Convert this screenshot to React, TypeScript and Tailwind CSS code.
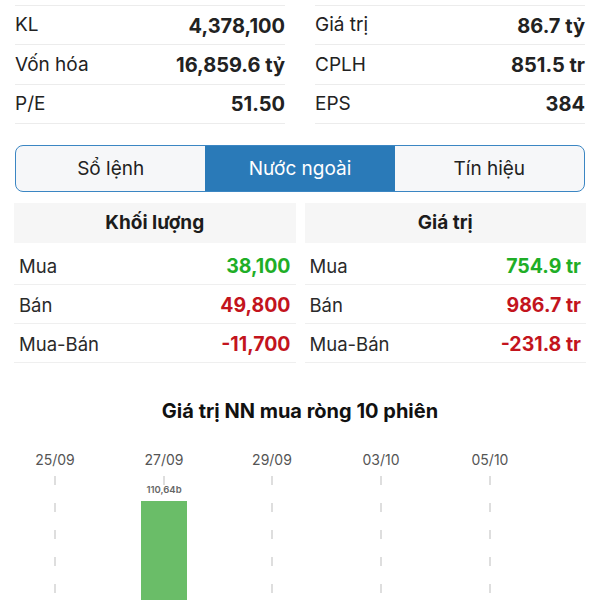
import { useState } from "react";

type Stat = { label: string; value: string };

const leftStats: Stat[] = [
  { label: "KL", value: "4,378,100" },
  { label: "Vốn hóa", value: "16,859.6 tỷ" },
  { label: "P/E", value: "51.50" },
];

const rightStats: Stat[] = [
  { label: "Giá trị", value: "86.7 tỷ" },
  { label: "CPLH", value: "851.5 tr" },
  { label: "EPS", value: "384" },
];

type FlowRow = { label: string; value: string; up: boolean };

const volumeRows: FlowRow[] = [
  { label: "Mua", value: "38,100", up: true },
  { label: "Bán", value: "49,800", up: false },
  { label: "Mua-Bán", value: "-11,700", up: false },
];

const valueRows: FlowRow[] = [
  { label: "Mua", value: "754.9 tr", up: true },
  { label: "Bán", value: "986.7 tr", up: false },
  { label: "Mua-Bán", value: "-231.8 tr", up: false },
];

const tabs = ["Sổ lệnh", "Nước ngoài", "Tín hiệu"];

const dates = [
  { x: 55, label: "25/09" },
  { x: 164, label: "27/09" },
  { x: 272, label: "29/09" },
  { x: 381, label: "03/10" },
  { x: 490, label: "05/10" },
];

function StatColumn({ items }: { items: Stat[] }) {
  return (
    <div className="flex flex-col border-t border-[#ececec]">
      {items.map((s) => (
        <div key={s.label} className="flex h-[39.3px] items-center justify-between border-b border-[#ececec] pt-[1px]">
          <span className="text-[19px] text-[#222]">{s.label}</span>
          <span className="text-[20px] font-bold text-[#222]">{s.value}</span>
        </div>
      ))}
    </div>
  );
}

function FlowTable({ title, rows }: { title: string; rows: FlowRow[] }) {
  return (
    <div className="flex flex-col">
      <div className="flex h-[40px] items-center justify-center bg-[#f6f6f6] text-[19px] font-bold text-[#1c1c1c]">
        {title}
      </div>
      <div className="mt-[3px] flex flex-col">
        {rows.map((r) => (
          <div key={r.label} className="flex h-[39px] items-center justify-between border-b border-[#efefef] px-[5px] pt-[3px]">
            <span className="text-[18.5px] text-[#2a2a2a]">{r.label}</span>
            <span className={r.up ? "text-[19.5px] font-bold text-[#1fae27]" : "text-[19.5px] font-bold text-[#c3141d]"}>
              {r.value}
            </span>
          </div>
        ))}
      </div>
    </div>
  );
}

function NetBuyChart() {
  return (
    <svg width={600} height={162} viewBox="0 0 600 162" className="block">
      {dates.map((d) => (
        <g key={d.label}>
          <text x={d.x} y={24} textAnchor="middle" fontSize={14} fill="#555" fontFamily="Inter, sans-serif">
            {d.label}
          </text>
          <line x1={d.x} y1={35} x2={d.x} y2={162} stroke="#bdbdbd" strokeWidth={1} strokeDasharray="9 18" />
        </g>
      ))}
      <text x={164} y={52} textAnchor="middle" fontSize={9.5} fontWeight={600} fill="#666" fontFamily="Inter, sans-serif">
        110,64b
      </text>
      <rect x={141} y={60} width={46} height={102} fill="#6abd68" />
    </svg>
  );
}

export default function App() {
  const [tab, setTab] = useState(1);

  return (
    <div className="h-[600px] w-[600px] overflow-hidden bg-white font-['Inter',sans-serif]">
      <div className="grid grid-cols-2 gap-[30px] px-[15px] pt-[5px]">
        <StatColumn items={leftStats} />
        <StatColumn items={rightStats} />
      </div>

      <div className="mx-[15px] mt-[21px] grid h-[47px] grid-cols-3 overflow-hidden rounded-[8px] border border-[#3b86c3] bg-[#f6f7f9]">
        {tabs.map((t, i) => (
          <button
            key={t}
            type="button"
            onClick={() => setTab(i)}
            className={
              i === tab
                ? "bg-[#2a7ab8] pt-[1px] text-[19px] text-white"
                : "pt-[1px] text-[19px] text-[#222]"
            }
          >
            {t}
          </button>
        ))}
      </div>

      <div className="mt-[11px] grid grid-cols-2 gap-[9px] px-[14px]">
        <FlowTable title="Khối lượng" rows={volumeRows} />
        <FlowTable title="Giá trị" rows={valueRows} />
      </div>

      <h2 className="mt-[33px] text-center text-[20px] font-bold text-[#111]">
        Giá trị NN mua ròng 10 phiên
      </h2>

      <div className="mt-[15px]">
        <NetBuyChart />
      </div>
    </div>
  );
}
